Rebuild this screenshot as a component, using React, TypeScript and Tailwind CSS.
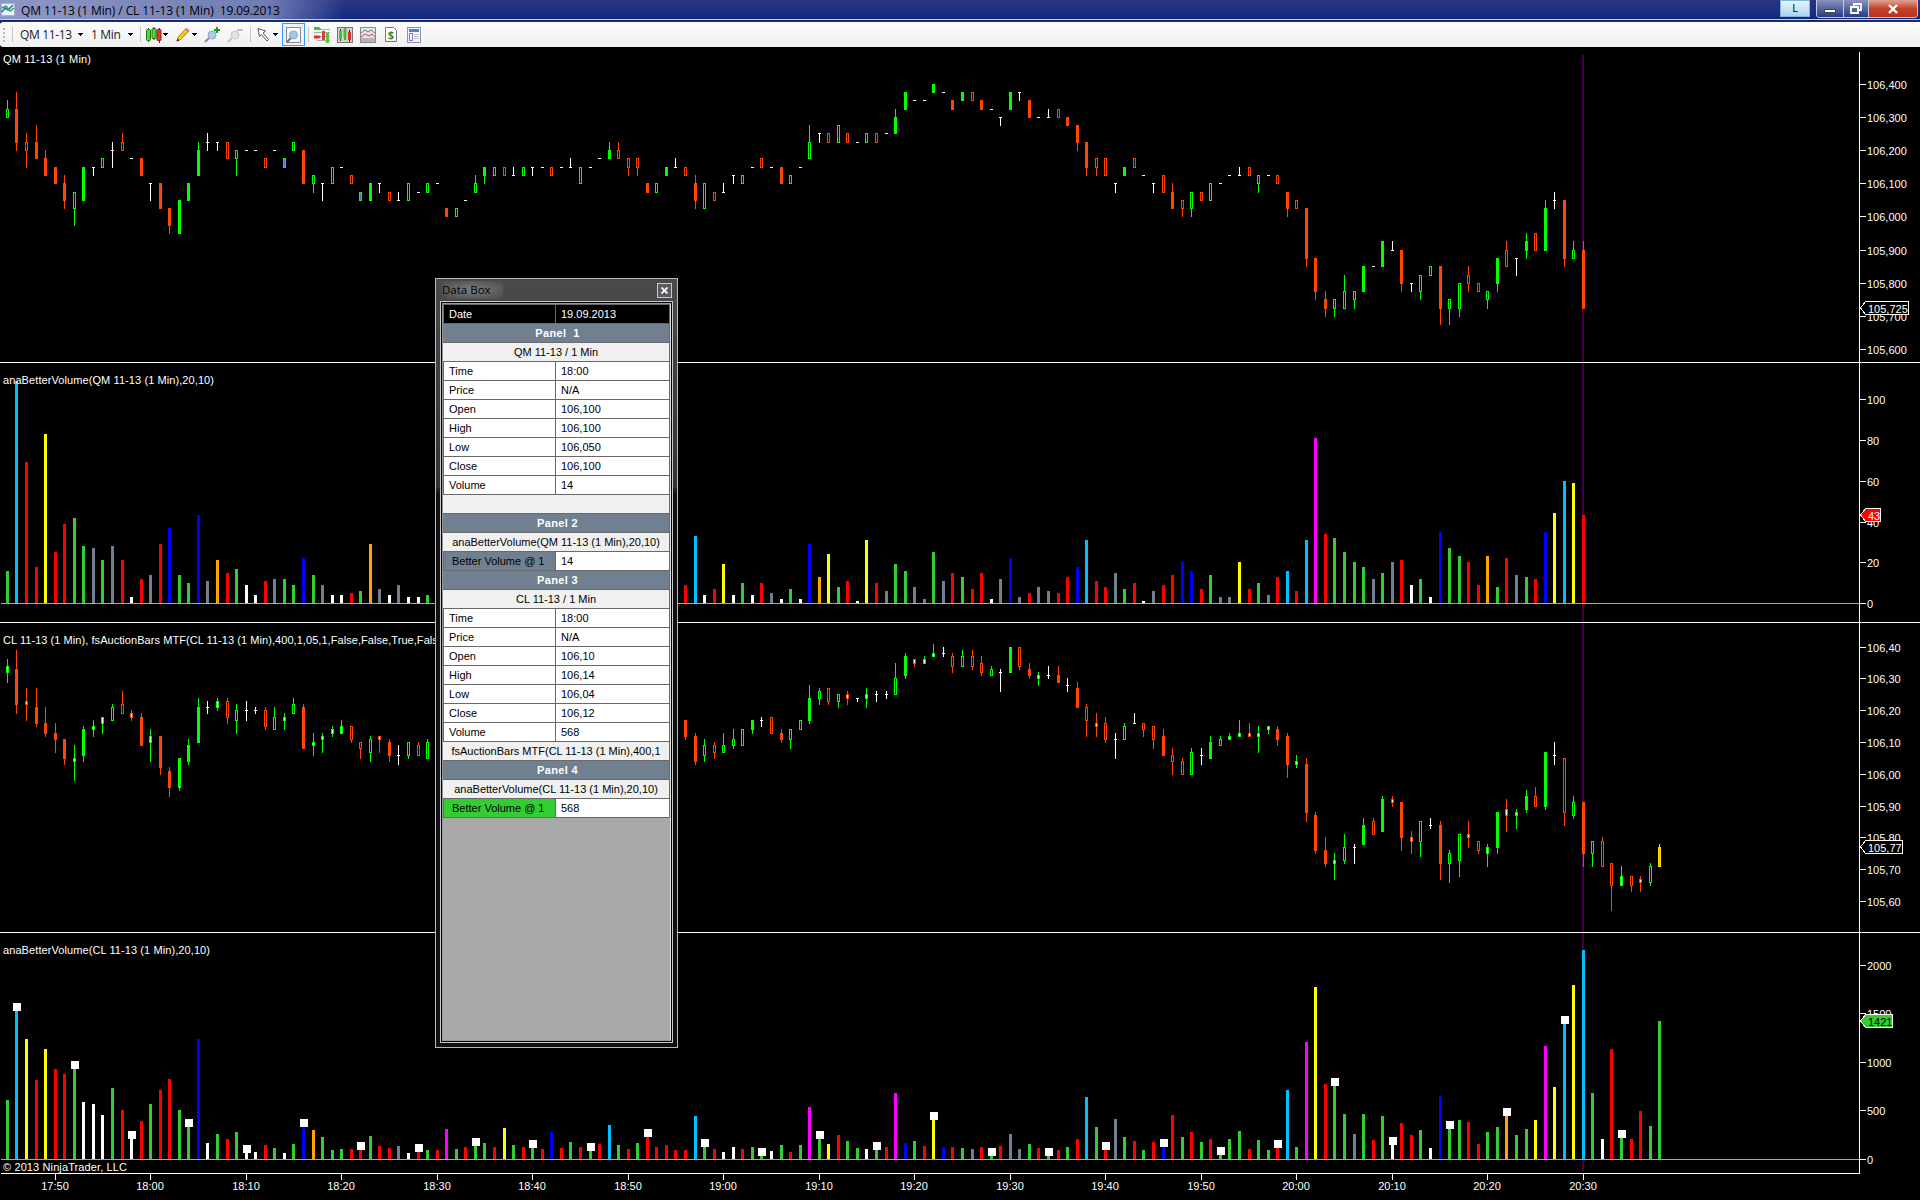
import clsx from 'clsx';

type Candle = { i: number; kind: string; high: number; top: number; bottom: number; low: number };
type Bar = { i: number; color: string; height: number; marked: boolean };

const GREEN = '#00ff00';
const RED = '#ff4500';

const BAR_COLORS: Record<string, string> = {
  G: '#32cd32',
  R: '#ff0000',
  C: '#00bfff',
  Y: '#ffff00',
  W: '#ffffff',
  S: '#708090',
  B: '#0000ff',
  O: '#ffa500',
  M: '#ff00ff',
};

// [outline, inside]
const CANDLE_COLORS: Record<string, [string, string]> = {
  G: [GREEN, GREEN],
  g: [GREEN, '#000000'],
  h: [GREEN, '#ffffff'],
  b: [GREEN, '#4169e1'],
  R: [RED, RED],
  r: [RED, '#000000'],
  o: [RED, '#ffffff'],
  y: ['#ffd700', '#c8c832'],
  w: ['#ffffff', '#ffffff'],
};

const barX = (i: number) => Math.round(6.9 + i * 9.551);

const parseCandles = (start: number, text: string, scale: (v: number) => number): Candle[] =>
  text.split(',').map((item, n) => {
    const [kind, ...rest] = item.trim().split(' ');
    const v = rest.map(Number).map(scale);
    // w high body low | w body
    const [high, top, bottom, low] = v.length === 1 ? [v[0], v[0], v[0], v[0]] : v;
    return { i: start + n, kind, high, top, bottom, low };
  });

const parseBars = (start: number, text: string): Bar[] =>
  text.split(' ').map((item, n) => ({
    i: start + n,
    color: BAR_COLORS[item[0]],
    height: parseInt(item.slice(1), 10),
    marked: item.endsWith('*'),
  }));

// one step is 0.025
const qmScale = (v: number) => Math.floor(84.1 + 8.3 * v);
const same = (v: number) => v;

const QM_CANDLES = parseCandles(
  0,
  'g 2 3 4 4,R 1 3 7 8,r 6 7 8 10,R 5 7 9 9,R 8 9 11 11,R 10 10 12 12,R 11 12 14 15,g 13 13 15 17,G 10 10 14 14,w 10 10 10 11,g 9 9 10 10,w 7 8 8 10,r 6 7 8 8,w 9,R 9 9 11 11,w 12 12 12 14,R 12 12 15 15,R 15 15 17 18,G 14 14 18 18,G 12 12 14 14,G 7 8 11 11,w 6 7 7 8,w 7 7 7 8,r 7 7 9 9,g 8 8 9 11,w 8,w 8,r 9 9 10 10,w 8,b 9 9 10 10,g 7 7 8 8,R 8 8 12 12,g 11 11 12 13,w 12 12 12 14,g 10 10 12 12,w 10,r 11 11 12 12,b 13 13 14 14,G 12 12 14 14,w 12 12 12 13,r 13 13 14 14,w 13 14 14 14,g 12 12 14 14,w 13,g 12 12 13 13,w 12,R 15 15 16 16,g 15 15 16 16,w 14,g 11 12 13 13,G 10 10 11 12,g 10 10 11 11,r 10 10 11 11,w 10 11 11 11,g 10 10 11 11,w 10 10 10 11,w 10,r 10 10 11 11,w 10,w 9 10 10 10,g 10 10 12 12,w 10,w 9,G 7 8 9 9,r 7 8 9 9,r 9 9 10 11,r 9 9 10 11,R 12 12 13 13,g 12 12 13 13,G 10 10 11 11,w 9 10 10 10,r 10 10 11 11,R 11 12 14 15,g 12 12 15 15,r 13 13 14 14,w 12 13 13 13,w 11 11 11 12,g 11 11 12 12,w 10,r 9 9 10 10,w 10,R 10 10 12 12,g 11 11 12 12,w 10,g 5 7 9 9,w 6 6 6 7,r 6 6 7 7,g 5 5 7 7,r 6 6 7 7,w 7,g 6 6 7 7,r 6 6 7 7,w 6,G 3 4 6 6,G 1 1 3 3,w 2,w 2,G 0 0 1 1,w 1,R 2 2 3 3,G 1 1 2 2,r 1 1 2 2,R 2 2 3 3,w 3,w 4 4 4 5,G 1 1 3 3,w 1 1 1 2,R 2 2 4 4,w 4,w 3 4 4 4,r 3 3 4 4,R 4 4 5 5,R 5 5 7 8,R 7 7 10 11,r 9 9 10 11,r 9 9 11 11,w 12 12 12 13,G 10 10 11 11,r 9 9 10 10,w 11,w 12 12 12 13,r 11 11 13 13,R 12 13 15 15,r 14 14 15 16,g 13 13 15 16,r 13 13 14 14,g 12 12 14 14,w 12,w 11,w 10 11 11 11,r 10 10 11 11,g 11 11 12 13,w 11,r 11 11 12 12,R 13 13 15 16,r 14 14 15 15,R 15 15 21 22,R 21 21 25 26,R 25 26 27 28,g 26 26 27 28,g 23 25 27 27,g 25 25 26 27,G 22 22 25 25,w 22,G 19 19 22 22,w 19 20 20 20,R 20 20 24 25,w 24 24 24 25,g 23 23 25 26,g 22 22 23 23,R 22 22 27 29,g 26 26 27 29,g 24 24 27 28,r 22 23 24 25,r 24 24 25 25,g 25 25 26 27,G 21 21 24 25,r 19 20 22 22,w 21 21 21 23,G 18 19 20 21,r 18 18 20 20,G 14 15 20 20,w 13 14 14 15,R 14 14 21 22,g 19 20 21 21,R 19 20 27 27',
  qmScale,
);

const CL_CANDLES = [
  ...parseCandles(
    0,
    'h 659 666 672 682,R 650 669 704 713,o 688 701 704 720,R 688 707 723 726,R 707 723 733 736,R 723 733 739 752,R 739 739 758 764,h 745 758 761 780,G 726 729 755 761,h 720 726 729 736,h 717 717 723 733,g 704 707 720 720,r 691 704 713 713,o 710 713 717 720,R 713 717 745 745,h 729 736 742 761,R 736 736 767 774,R 767 771 787 796,G 758 758 787 790,G 739 745 761 764,G 698 707 742 742,w 701 707 707 713,h 698 701 707 710,r 698 701 717 723,g 704 710 720 733,w 701 710 710 720,w 707 710 710 713,r 707 710 726 729,g 707 717 729 729,h 713 717 720 729,g 698 704 713 713,R 704 707 748 748,h 733 742 745 755,h 733 736 739 752,h 726 729 733 736,h 720 726 733 733,r 726 726 739 742,r 742 742 748 758,g 736 739 752 761,o 736 736 739 752,R 739 742 755 761,w 745 755 755 764,g 742 742 755 758,r 742 745 755 755,g 739 742 758 758',
    same,
  ),
  ...parseCandles(
    71,
    'R 720 720 736 739,R 733 736 761 764,g 739 745 755 761,r 742 745 752 758,g 733 745 752 752,g 729 739 745 748,g 729 729 745 745,G 720 720 729 733,w 717 720 720 726,r 717 717 733 733,R 729 733 739 742,g 729 729 739 748,g 720 720 729 729,G 685 698 720 723,g 688 691 698 704,r 688 688 701 704,g 694 694 701 707,o 691 694 698 704,w 698 698 698 701,h 688 694 698 707,w 691 694 694 701,w 691 694 694 698,g 663 678 694 694,G 653 656 675 678,o 659 659 663 666,h 656 659 663 663,h 644 653 656 656,w 647 653 653 656,r 653 656 666 672,g 650 656 666 666,r 650 656 666 669,r 656 663 672 675,g 666 669 675 675,w 669 672 672 691,G 647 647 672 672,r 647 647 666 669,R 663 669 675 678,h 672 675 678 685,w 666 675 675 678,R 666 675 682 682,w 678 685 685 691,R 682 688 707 707,r 704 707 720 736,o 713 723 726 736,r 717 723 739 742,w 733 739 739 758,g 723 726 739 739,w 713 723 723 723,r 723 723 729 736,r 726 726 739 748,R 729 736 755 755,r 748 755 761 774,r 758 761 774 774,g 748 752 774 774,w 748 755 755 764,G 736 742 758 758,g 736 739 745 745,h 733 736 739 739,h 720 733 736 736,o 723 733 736 736,h 726 733 736 752,h 726 726 729 733,R 726 729 739 745,R 733 736 764 777,h 755 761 764 767,R 758 764 812 821,R 812 815 850 853,R 837 850 863 866,h 853 860 863 879,g 834 847 860 863,w 844 847 847 863,G 818 825 844 844,r 818 821 834 834,G 796 799 831 831,o 796 799 802 806,R 802 802 837 850,o 831 837 841 853,g 821 821 841 856,w 818 825 825 828,R 821 825 863 879,g 850 853 863 882,g 834 834 860 876,o 821 834 837 847,r 841 841 850 853,h 844 847 853 866,G 812 812 847 853,o 799 809 815 831,h 809 812 815 828,G 790 796 809 812,r 787 796 806 806,G 752 752 806 809,w 742 755 755 764,r 758 758 812 825,g 796 802 815 818,R 802 802 853 866,g 841 841 853 866,r 837 841 866 866,r 863 863 885 910,h 866 876 885 885,r 876 876 885 891,o 876 879 882 891,g 863 866 882 885,y 844 847 866 866',
    same,
  ),
];

const QM_VOLUME = [
  ...parseBars(
    0,
    'G32 C222 R141 R36 Y169 R51 R79 G85 G57 S55 G43 S57 R43 W6 R24 S28 R59 B75 G28 G20 B88 S22 O43 R30 G34 W18 W8 R22 S24 G24 G18 B45 G28 S18 W8 W8 R10 G12 O59 S14 W8 S18 W6 W6 G8',
  ),
  ...parseBars(
    71,
    'R18 C67 W8 R14 Y39 W8 G20 W8 R20 S10 W4 G14 W4 B59 O26 Y49 G16 R22 W2 Y63 R20 S12 G39 G32 S16 S4 G51 S22 R30 G26 R14 R30 W4 S24 B45 S6 R10 S16 S12 R10 R26 B36 C63 R22 R16 S30 G14 R20 W2 S12 R18 R28 B41 B32 R14 G28 S6 S6 Y41 R14 G20 S8 R26 C32 R12 C63 M165 R69 G65 G51 G41 G36 S24 G30 S41 R43 W18 G24 W6 B71 G55 G47 R41 R18 O47 G16 R45 S28 G26 R24 B71 Y90 C122 Y120 R88',
  ),
];

const CL_VOLUME = [
  ...parseBars(
    0,
    'G59 C152* Y120 R79 Y110 R90 R85 G94* W57 W55 W44 G71 R49 W24* R38 G55 R69 R80 G49 G36* B120 W16 G25 R20 G27 W10* W7 R14 G11 W6 G15 B36* O29 G22 G9 G10 R10 R13* G23 R13 R11 S13 W6 R11* G9 R9',
  ),
  ...parseBars(
    46,
    'M30 G10 R12 G17* G16 R12 Y31 G14 R12 G15* R10 B27 R11 G17 R12 G12* R15 C34 G14 R10 G16 R26* R12 R14 R9 R9 C43 G16* R10 W7 W12 R10 G12 G7* W8 G14 R7 G14 M52 G24* Y15 R24 G18 G11 W10 G13* R12 M66 B16 G18 R13 Y43* B12 R12 G11 S10 R12 G7*',
  ),
  ...parseBars(104, 'R13 S25 S10 G15 R11 G7* R9 G12 R20 C62 G32 R13* S40 G22 R18 G9 R17 B16* R44 G22 R27 G17 R20 G8* G20'),
  ...parseBars(
    129,
    'G28 R10 G19 G9 R15* C69 G12 M117 Y172 R75 G77* G45 S25 G45 R19 G43 W18* R36 R24 G29 W11 B63 G34* G39 R37 R15 G27 G32 O47* G24 G30 Y39 M113 Y72 C139* Y174 C209 G66 W20 R110 G25* R20 R48 G33 G138',
  ),
];

const TIMES = ['17:50', '18:00', '18:10', '18:20', '18:30', '18:40', '18:50', '19:00', '19:10', '19:20', '19:30', '19:40', '19:50', '20:00', '20:10', '20:20', '20:30'];

const Candles = ({ data }: { data: Candle[] }) => (
  <>
    {data.map(({ i, kind, high, top, bottom, low }) => {
      const x = barX(i);
      const [line, inside] = CANDLE_COLORS[kind];
      return (
        <g key={i}>
          <rect x={x} y={high} width={1} height={low - high + 1} fill={line} />
          <rect x={x - 1} y={top} width={3} height={bottom - top + 1} fill={line} />
          {bottom - top > 1 && <rect x={x} y={top + 1} width={1} height={bottom - top - 1} fill={inside} />}
        </g>
      );
    })}
  </>
);

const Bars = ({ data, base }: { data: Bar[]; base: number }) => (
  <>
    <rect x={1} y={base} width={1858} height={1} fill="#a9a9a9" />
    {data.map(({ i, color, height }) => (
      <rect key={i} x={barX(i) - 1} y={base - height} width={3} height={height} fill={color} />
    ))}
    {data
      .filter((bar) => bar.marked)
      .map(({ i, height }) => (
        <rect key={i} x={barX(i) - 3} y={base - height - 4} width={8} height={8} fill="#ffffff" />
      ))}
  </>
);

type PanelProps = {
  top: number;
  height: number;
  label: string;
  labelY: number;
  labelWidth: number;
  ticks: [string, number][];
  tag: { text: string; y: number; width: number; fill: string; color: string };
  last?: boolean;
  children: React.ReactNode;
};

const Panel = ({ top, height, label, labelY, labelWidth, ticks, tag, last, children }: PanelProps) => (
  <svg
    className="block shrink-0"
    width={1920}
    height={height}
    viewBox={`0 ${top} 1920 ${height}`}
    shapeRendering="crispEdges"
    fontFamily="'Liberation Sans', Arial, sans-serif"
    fontSize={11}
  >
    <rect x={0} y={top} width={1920} height={height} fill="#000000" />
    <rect x={1582} y={Math.max(top, 55)} width={2} height={last ? 238 : height} fill="#460046" />
    {children}
    <text x={3} y={labelY} fill="#ffffff" textLength={labelWidth}>
      {label}
    </text>
    <rect x={1859} y={Math.max(top, 52)} width={1} height={height} fill="#ffffff" />
    {ticks.map(([text, y]) => (
      <g key={text}>
        <rect x={1859} y={y} width={7} height={1} fill="#ffffff" />
        <text x={1867} y={y + 4.5} fill="#ffffff">
          {text}
        </text>
      </g>
    ))}
    <path
      d={`M1860.5 ${tag.y} l5 -6.5 h${tag.width} v13 h-${tag.width} z`}
      fill={tag.fill}
      stroke="#ffffff"
    />
    <text x={1868} y={tag.y + 4.5} fill={tag.color}>
      {tag.text}
    </text>
    {!last && <rect x={0} y={top + height - 1} width={1920} height={1} fill="#ffffff" />}
  </svg>
);

const TimeAxis = () => (
  <svg
    className="block shrink-0"
    width={1920}
    height={27}
    viewBox="0 1173 1920 27"
    shapeRendering="crispEdges"
    fontFamily="'Liberation Sans', Arial, sans-serif"
    fontSize={11}
  >
    <rect x={0} y={1173} width={1920} height={27} fill="#000000" />
    <rect x={1} y={1173} width={1859} height={1} fill="#ffffff" />
    {TIMES.map((time, n) => {
      const x = barX(5 + n * 10);
      return (
        <g key={time}>
          <rect x={x} y={1173} width={1} height={7} fill="#ffffff" />
          <text x={x} y={1190} fill="#ffffff" textAnchor="middle">
            {time}
          </text>
        </g>
      );
    })}
  </svg>
);

const Caret = () => (
  <svg width={5} height={3} viewBox="0 0 5 3" shapeRendering="crispEdges">
    <path d="M0 0h5L2.5 3z" fill="#000" />
  </svg>
);

const Separator = () => <div className="h-[15px] w-px bg-[#c5c5c5]" />;

const TitleBar = () => (
  <div className="flex h-[22px] shrink-0 items-start border-b border-[#5a1a4c] bg-linear-to-b from-[#2a3480] via-[#1c2f86] to-[#12246e]">
    <div className="flex h-[20px] w-full items-center justify-between border-b border-[#c9cbe4] bg-linear-to-r from-[#8f97c4] from-0% via-[#6f7cb4] via-14% to-transparent to-18%">
      <div className="flex items-center gap-[6px] pl-px">
        <svg width={14} height={14} viewBox="0 0 14 14">
          <rect x={0.5} y={0.5} width={13} height={12} fill="#eef3f8" stroke="#9fb3cc" />
          <path d="M1 9l3-4 3 2 5-5" fill="none" stroke="#1f6fd0" strokeWidth={1.6} />
          <path d="M1 5l4-2 4 5 4-3" fill="none" stroke="#3ba542" strokeWidth={1.4} />
        </svg>
        <span className="pt-[2px] text-[12px] leading-[18px] tracking-[-0.1px] whitespace-pre text-black">
          {'QM 11-13 (1 Min) / CL 11-13 (1 Min)  19.09.2013'}
        </span>
      </div>
      <div className="flex h-full items-start gap-[6px] pr-[2px]">
        <div className="flex h-[17px] w-[30px] items-center justify-center border border-[#7fb4dc] bg-linear-to-b from-[#e8f4fc] to-[#a9d3f0] text-[11px] text-black">
          L
        </div>
        <div className="flex h-[18px] overflow-hidden rounded-b-[4px] border border-t-0 border-[#c4c8e0]">
          <div className="flex w-[27px] items-end justify-center border-r border-[#c4c8e0] bg-linear-to-b from-[#8b93bd] to-[#2a3a80] pb-[4px]">
            <div className="h-[4px] w-[12px] border border-[#444] bg-white" />
          </div>
          <div className="flex w-[25px] items-center justify-center border-r border-[#c4c8e0] bg-linear-to-b from-[#8b93bd] to-[#2a3a80]">
            <svg width={12} height={11} viewBox="0 0 12 11">
              <path d="M4 3V1h7v6H9M1 4h7v6H1z" fill="none" stroke="#fff" strokeWidth={1.8} />
            </svg>
          </div>
          <div className="flex w-[48px] items-center justify-center bg-linear-to-b from-[#e0a294] via-[#c4412a] to-[#b8331c]">
            <svg width={12} height={10} viewBox="0 0 12 10">
              <path d="M2 1l8 8M10 1L2 9" stroke="#fff" strokeWidth={2.4} />
            </svg>
          </div>
        </div>
      </div>
    </div>
  </div>
);

const Toolbar = () => (
  <div className="flex h-[25px] shrink-0 items-center rounded-l-[3px] bg-linear-to-b from-[#fdfdfd] to-[#f0f0f0] text-[12px] text-[#1a1a1a]">
    <div className="flex w-[12px] flex-col items-start gap-[2px] pl-[3px]">
      <div className="size-[2px] bg-[#b8b8b8]" />
      <div className="size-[2px] bg-[#b8b8b8]" />
      <div className="size-[2px] bg-[#b8b8b8]" />
      <div className="size-[2px] bg-[#b8b8b8]" />
    </div>
    <Separator />
    <span className="ml-[7px] w-[58px] tracking-[-0.35px]">QM 11-13</span>
    <Caret />
    <span className="ml-[8px] w-[37px] tracking-[-0.35px]">1 Min</span>
    <Caret />
    <div className="w-[7px]" />
    <Separator />
    <svg className="ml-[5px]" width={16} height={16} viewBox="0 0 16 16">
      <path d="M2.5 1v14M8 0v13M13.500 1v15" stroke="#333" />
      <rect x={0.5} y={2.500} width={4} height={11} rx={1} fill="#4fdc2e" stroke="#23701a" />
      <rect x={6} y={1.500} width={4} height={10} rx={1} fill="#4fdc2e" stroke="#23701a" />
      <rect x={11} y={2.500} width={4} height={11} rx={1} fill="#e03a30" stroke="#8c1c18" />
    </svg>
    <div className="w-px" />
    <Caret />
    <svg className="ml-[7px]" width={17} height={16} viewBox="0 0 17 16">
      <path d="M2 14l1.500-4.500L11 1.500l3 2.500-8.500 8.500z" fill="#f9c81c" stroke="#b87d10" />
      <path d="M10 2.500l1.500-1.500 3 2.500-1.500 1.500z" fill="#ef6b5c" />
      <path d="M1.500 14.500l1-3 2 2z" fill="#333" />
    </svg>
    <Caret />
    <svg className="ml-[7px]" width={16} height={16} viewBox="0 0 16 16">
      <path d="M1 15l4-4" stroke="#8a8a8a" strokeWidth={2} />
      <circle cx={8} cy={8} r={4} fill="#a9d0f0" stroke="#8fa9bf" />
      <path d="M13 0v6M10 3h6" stroke="#18a018" strokeWidth={2} />
    </svg>
    <svg className="ml-[7px]" width={16} height={16} viewBox="0 0 16 16">
      <path d="M1 15l4-4" stroke="#c4c4c4" strokeWidth={2} />
      <circle cx={8} cy={8} r={4} fill="#e2e2e2" stroke="#c8c8c8" />
      <path d="M10 3h6" stroke="#c0c0c0" strokeWidth={2} />
    </svg>
    <div className="w-[7px]" />
    <Separator />
    <svg className="ml-[6px]" width={13} height={15} viewBox="0 0 13 15">
      <path d="M1 1.500l1.500 8 2-2 5.500 6.500 1.500-1.500-5.500-6.500 2.500-2z" fill="#fff" stroke="#555" />
    </svg>
    <div className="w-[3px]" />
    <Caret />
    <div className="ml-[4px] flex size-[23px] items-center justify-center border border-[#3399ff] bg-[#e8f2fd]">
      <svg width={15} height={16} viewBox="0 0 15 16">
        <rect x={0.500} y={0.500} width={14} height={15} fill="#f7f7f7" stroke="#8a8a8a" />
        <path d="M1 15l4-4" stroke="#777" strokeWidth={2} />
        <circle cx={7.500} cy={8} r={4} fill="#9fc8ea" stroke="#8fa9bf" />
      </svg>
    </div>
    <div className="w-[3px]" />
    <Separator />
    <svg className="ml-[5px]" width={16} height={16} viewBox="0 0 16 16">
      <path d="M4 2.500h12M0 5.500h16M0 9.500h16M3 13.500h13" stroke="#aaa" />
      <path d="M0 0h5l2 1.500-2 1.500H0z" fill="#36c428" />
      <path d="M0 8.500h5l2 1.500-2 1.500H0z" fill="#d93028" />
      <rect x={8} y={4} width={3} height={9} fill="#d94038" />
      <rect x={12} y={6} width={3} height={10} fill="#4fc83e" />
    </svg>
    <svg className="ml-[7px]" width={16} height={16} viewBox="0 0 16 16">
      <rect x={0.500} y={0.500} width={15} height={15} fill="#d0d0d0" stroke="#777" />
      <path d="M3.500 2v12M8 1v12M12.500 3v12" stroke="#333" />
      <rect x={2} y={4} width={3} height={8} fill="#3fc82e" />
      <rect x={6.500} y={2} width={3} height={8} fill="#3fc82e" />
      <rect x={11} y={5} width={3} height={8} fill="#d93028" />
    </svg>
    <svg className="ml-[7px]" width={16} height={16} viewBox="0 0 16 16">
      <rect x={0.500} y={0.500} width={15} height={15} fill="#e4e4e4" stroke="#8a8a8a" />
      <rect x={1} y={11} width={14} height={4} fill="#b4b4b4" />
      <path d="M1 6l4-3 3 2 3-2 4 3" fill="none" stroke="#3d9d70" />
      <path d="M1 10l4-3 4 2 3-2 3 3" fill="none" stroke="#d05050" />
    </svg>
    <svg className="ml-[9px]" width={12} height={15} viewBox="0 0 12 15">
      <path d="M0.500 0.500h8l3 3v11h-11z" fill="#fff" stroke="#777" />
      <text x={6} y={12} fontSize={11} fontWeight="bold" textAnchor="middle" fill="#2c8a2c">
        $
      </text>
    </svg>
    <svg className="ml-[10px]" width={14} height={16} viewBox="0 0 14 16">
      <rect x={0.500} y={0.500} width={13} height={15} fill="#f2f4fa" stroke="#8a93b0" />
      <rect x={2} y={2} width={10} height={3} fill="#4a86d8" />
      <rect x={2.500} y={6.500} width={3} height={7} fill="#fff" stroke="#8a6fe0" />
      <path d="M7 7.500h5M7 9.500h5M7 11.500h5" stroke="#c4c8d4" />
    </svg>
  </div>
);

type BoxRow = { head?: string; sub?: string; cells?: [string, string]; tone?: string };

const priceRows = (values: string[]): BoxRow[] =>
  ['Time', 'Price', 'Open', 'High', 'Low', 'Close', 'Volume'].map((name, n) => ({ cells: [name, values[n]] }));

const BOX_ROWS: BoxRow[] = [
  { cells: ['Date', '19.09.2013'], tone: 'date' },
  { head: 'Panel  1' },
  { sub: 'QM 11-13 / 1 Min' },
  ...priceRows(['18:00', 'N/A', '106,100', '106,100', '106,050', '106,100', '14']),
  { sub: '' },
  { head: 'Panel 2' },
  { sub: 'anaBetterVolume(QM 11-13 (1 Min),20,10)' },
  { cells: ['Better Volume @ 1', '14'], tone: 'slate' },
  { head: 'Panel 3' },
  { sub: 'CL 11-13 / 1 Min' },
  ...priceRows(['18:00', 'N/A', '106,10', '106,14', '106,04', '106,12', '568']),
  { sub: 'fsAuctionBars MTF(CL 11-13 (1 Min),400,1' },
  { head: 'Panel 4' },
  { sub: 'anaBetterVolume(CL 11-13 (1 Min),20,10)' },
  { cells: ['Better Volume @ 1', '568'], tone: 'green' },
];

const DataRow = ({ head, sub, cells, tone }: BoxRow) => {
  if (cells) {
    return (
      <div className={clsx('flex h-[19px] border-b border-[#696969]', tone === 'date' ? 'bg-black text-white' : 'bg-white')}>
        <div
          className={clsx(
            'w-[113px] border-r border-l border-[#696969] leading-[18px]',
            tone === 'slate' && 'bg-[#708090] pl-[8px]',
            tone === 'green' && 'bg-[#32cd32] pl-[8px]',
            tone !== 'slate' && tone !== 'green' && 'pl-[5px]',
          )}
        >
          {cells[0]}
        </div>
        <div className="pl-[5px] leading-[18px]">{cells[1]}</div>
      </div>
    );
  }
  if (head) {
    return (
      <div className="h-[19px] border-b border-[#696969] bg-[#708090] pl-[3px] text-center leading-[19px] font-bold tracking-[0.35px] whitespace-pre text-white">
        {head}
      </div>
    );
  }
  return (
    <div className="h-[19px] overflow-hidden border-b border-[#696969] bg-[#f0f0f0] text-center leading-[19px] whitespace-nowrap">
      {sub}
    </div>
  );
};

const DataBox = () => (
  <div className="absolute top-[278px] left-[435px] flex h-[770px] w-[243px] flex-col border border-[#b9b9b9] bg-linear-to-b from-[#4a4a4c] from-0% via-[#333336] via-27% to-[#101014] to-28% px-[4px] pb-[4px] font-['Liberation_Sans',Arial,sans-serif] text-[11px] text-black">
    <div className="flex h-[22px] shrink-0 items-center justify-between pr-px pl-[2px]">
      <span className="bg-radial from-[#7c7c7e] to-transparent pr-3 font-['Open_Sans','Noto_Sans',sans-serif] text-[11.5px] text-black">Data Box</span>
      <div className="flex h-[15px] w-[15px] items-center justify-center border border-[#c8c8c8] bg-[#5c5c60]">
        <svg width={7} height={7} viewBox="0 0 7 7">
          <path d="M0.500 0.500l6 6M6.500 0.500l-6 6" stroke="#fff" strokeWidth={1.800} />
        </svg>
      </div>
    </div>
    <div className="flex grow flex-col border border-[#c8c8c8] bg-black p-px">
      <div className="flex grow flex-col border border-[#9a9a9a] border-r-[#e0e0e0] bg-[#a9a9a9]">
        <div className="border-t border-r border-[#696969]">
          {BOX_ROWS.map((row, n) => (
            <DataRow key={n} {...row} />
          ))}
        </div>
      </div>
    </div>
  </div>
);

export default function App() {
  return (
    <div className="relative flex h-[1200px] w-[1920px] flex-col overflow-hidden bg-black font-['Open_Sans','Noto_Sans',sans-serif]">
      <TitleBar />
      <Toolbar />
      <Panel
        top={47}
        height={316}
        label="QM 11-13 (1 Min)"
        labelY={63}
        labelWidth={88}
        ticks={[
          ['106,400', 84],
          ['106,300', 117],
          ['106,200', 150],
          ['106,100', 183],
          ['106,000', 216],
          ['105,900', 250],
          ['105,800', 283],
          ['105,700', 316],
          ['105,600', 349],
        ]}
        tag={{ text: '105,725', y: 308, width: 43, fill: '#000000', color: '#ffffff' }}
      >
        <Candles data={QM_CANDLES} />
      </Panel>
      <Panel
        top={363}
        height={260}
        label="anaBetterVolume(QM 11-13 (1 Min),20,10)"
        labelY={384}
        labelWidth={211}
        ticks={[
          ['100', 399],
          ['80', 440],
          ['60', 481],
          ['40', 522],
          ['20', 562],
          ['0', 603],
        ]}
        tag={{ text: '43', y: 515, width: 15, fill: '#ff0000', color: '#ffffff' }}
      >
        <Bars data={QM_VOLUME} base={603} />
      </Panel>
      <Panel
        top={623}
        height={310}
        label="CL 11-13 (1 Min), fsAuctionBars MTF(CL 11-13 (1 Min),400,1,05,1,False,False,True,False"
        labelY={644}
        labelWidth={441}
        ticks={[
          ['106,40', 647],
          ['106,30', 678],
          ['106,20', 710],
          ['106,10', 742],
          ['106,00', 774],
          ['105,90', 806],
          ['105,80', 837],
          ['105,70', 869],
          ['105,60', 901],
        ]}
        tag={{ text: '105,77', y: 847, width: 37, fill: '#000000', color: '#ffffff' }}
      >
        <Candles data={CL_CANDLES} />
      </Panel>
      <Panel
        top={933}
        height={240}
        label="anaBetterVolume(CL 11-13 (1 Min),20,10)"
        labelY={954}
        labelWidth={207}
        ticks={[
          ['2000', 965],
          ['1500', 1013],
          ['1000', 1062],
          ['500', 1110],
          ['0', 1159],
        ]}
        tag={{ text: '1421', y: 1021, width: 27, fill: '#32cd32', color: '#000000' }}
        last
      >
        <Bars data={CL_VOLUME} base={1159} />
        <text x={3} y={1171} fill="#ffffff" textLength={124}>
          © 2013 NinjaTrader, LLC
        </text>
      </Panel>
      <TimeAxis />
      <DataBox />
    </div>
  );
}
